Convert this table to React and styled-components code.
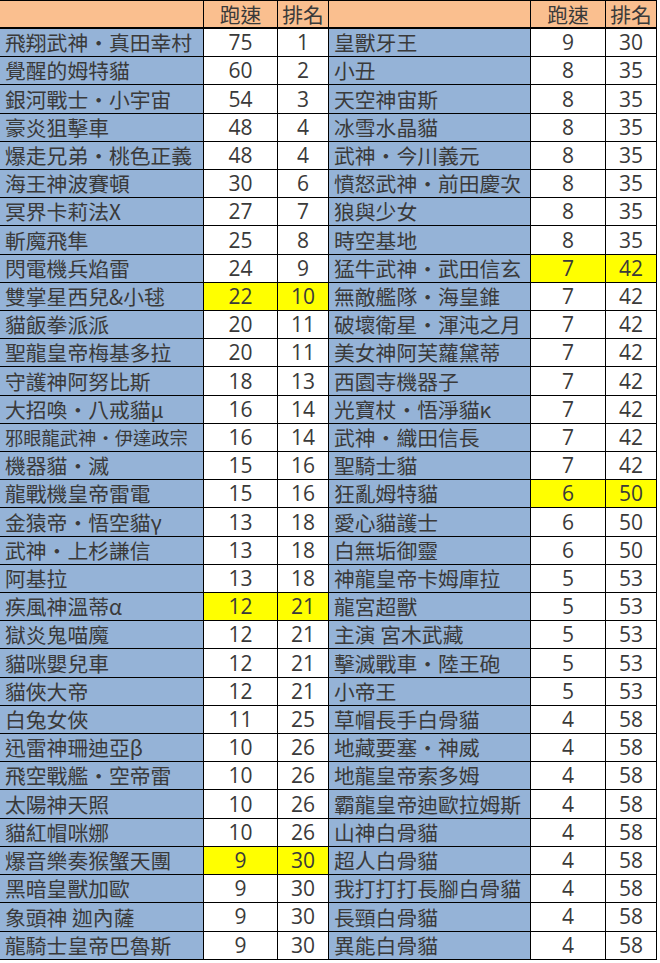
import React from "react";
import styled, { createGlobalStyle, css } from "styled-components";

const GlobalStyle = createGlobalStyle`
  html, body { margin: 0; padding: 0; background: #ffffff; }
  body { font-family: "Noto Sans CJK TC", "Noto Sans", sans-serif; }
`;

const Sheet = styled.div`
  display: grid;
  grid-template-columns: 204px 74px 51px 202px 75px 51px;
  grid-template-rows: 28px;
  grid-auto-rows: 28.21px;
  width: 657px;
  border-top: 1px solid #000;
`;

const Cell = styled.div`
  box-sizing: border-box;
  border-right: 1px solid #000;
  border-bottom: 1px solid #000;
  display: flex;
  align-items: center;
  white-space: nowrap;
  color: #3a3a3a;
  line-height: 1;
`;

const HeadCell = styled(Cell)`
  background: #fabf8f;
  border-bottom: 2px solid #000;
  justify-content: center;
  font-family: "Noto Sans CJK TC", sans-serif;
  font-size: 20.8px;
`;

const NameCell = styled(Cell)`
  background: #95b3d7;
  padding-left: 5px;
  font-family: "Noto Sans CJK TC", sans-serif;
  font-size: ${(p) => (p.$tight ? "18.3px" : "20.8px")};
`;

const NumCell = styled(Cell)`
  justify-content: center;
  font-family: "Open Sans", "Noto Sans", sans-serif;
  font-size: 21px;
  background: #ffffff;
  ${(p) =>
    p.$hl &&
    css`
      background: #ffff00;
    `}
`;

const left = [
  ["飛翔武神・真田幸村", 75, 1],
  ["覺醒的姆特貓", 60, 2],
  ["銀河戰士・小宇宙", 54, 3],
  ["豪炎狙擊車", 48, 4],
  ["爆走兄弟・桃色正義", 48, 4],
  ["海王神波賽頓", 30, 6],
  ["冥界卡莉法X", 27, 7],
  ["斬魔飛隼", 25, 8],
  ["閃電機兵焰雷", 24, 9],
  ["雙掌星西兒&小毬", 22, 10, true],
  ["貓飯拳派派", 20, 11],
  ["聖龍皇帝梅基多拉", 20, 11],
  ["守護神阿努比斯", 18, 13],
  ["大招喚・八戒貓μ", 16, 14],
  ["邪眼龍武神・伊達政宗", 16, 14, false, true],
  ["機器貓・滅", 15, 16],
  ["龍戰機皇帝雷電", 15, 16],
  ["金猿帝・悟空貓γ", 13, 18],
  ["武神・上杉謙信", 13, 18],
  ["阿基拉", 13, 18],
  ["疾風神溫蒂α", 12, 21, true],
  ["獄炎鬼喵魔", 12, 21],
  ["貓咪嬰兒車", 12, 21],
  ["貓俠大帝", 12, 21],
  ["白兔女俠", 11, 25],
  ["迅雷神珊迪亞β", 10, 26],
  ["飛空戰艦・空帝雷", 10, 26],
  ["太陽神天照", 10, 26],
  ["貓紅帽咪娜", 10, 26],
  ["爆音樂奏猴蟹天團", 9, 30, true],
  ["黑暗皇獸加歐", 9, 30],
  ["象頭神 迦內薩", 9, 30],
  ["龍騎士皇帝巴魯斯", 9, 30],
];

const right = [
  ["皇獸牙王", 9, 30],
  ["小丑", 8, 35],
  ["天空神宙斯", 8, 35],
  ["冰雪水晶貓", 8, 35],
  ["武神・今川義元", 8, 35],
  ["憤怒武神・前田慶次", 8, 35],
  ["狼與少女", 8, 35],
  ["時空基地", 8, 35],
  ["猛牛武神・武田信玄", 7, 42, true],
  ["無敵艦隊・海皇錐", 7, 42],
  ["破壞衛星・渾沌之月", 7, 42],
  ["美女神阿芙蘿黛蒂", 7, 42],
  ["西園寺機器子", 7, 42],
  ["光寶杖・悟淨貓κ", 7, 42],
  ["武神・織田信長", 7, 42],
  ["聖騎士貓", 7, 42],
  ["狂亂姆特貓", 6, 50, true],
  ["愛心貓護士", 6, 50],
  ["白無垢御靈", 6, 50],
  ["神龍皇帝卡姆庫拉", 5, 53],
  ["龍宮超獸", 5, 53],
  ["主演 宮木武藏", 5, 53],
  ["擊滅戰車・陸王砲", 5, 53],
  ["小帝王", 5, 53],
  ["草帽長手白骨貓", 4, 58],
  ["地藏要塞・神威", 4, 58],
  ["地龍皇帝索多姆", 4, 58],
  ["霸龍皇帝迪歐拉姆斯", 4, 58],
  ["山神白骨貓", 4, 58],
  ["超人白骨貓", 4, 58],
  ["我打打打長腳白骨貓", 4, 58],
  ["長頸白骨貓", 4, 58],
  ["異能白骨貓", 4, 58],
];

function Entry({ row }) {
  const [name, speed, rank, hl, tight] = row;
  return (
    <>
      <NameCell $tight={tight}>{name}</NameCell>
      <NumCell $hl={hl}>{speed}</NumCell>
      <NumCell $hl={hl}>{rank}</NumCell>
    </>
  );
}

export default function App() {
  return (
    <>
      <GlobalStyle />
      <Sheet>
        <HeadCell />
        <HeadCell>跑速</HeadCell>
        <HeadCell>排名</HeadCell>
        <HeadCell />
        <HeadCell>跑速</HeadCell>
        <HeadCell>排名</HeadCell>
        {left.map((row, i) => (
          <React.Fragment key={i}>
            <Entry row={row} />
            <Entry row={right[i]} />
          </React.Fragment>
        ))}
      </Sheet>
    </>
  );
}
